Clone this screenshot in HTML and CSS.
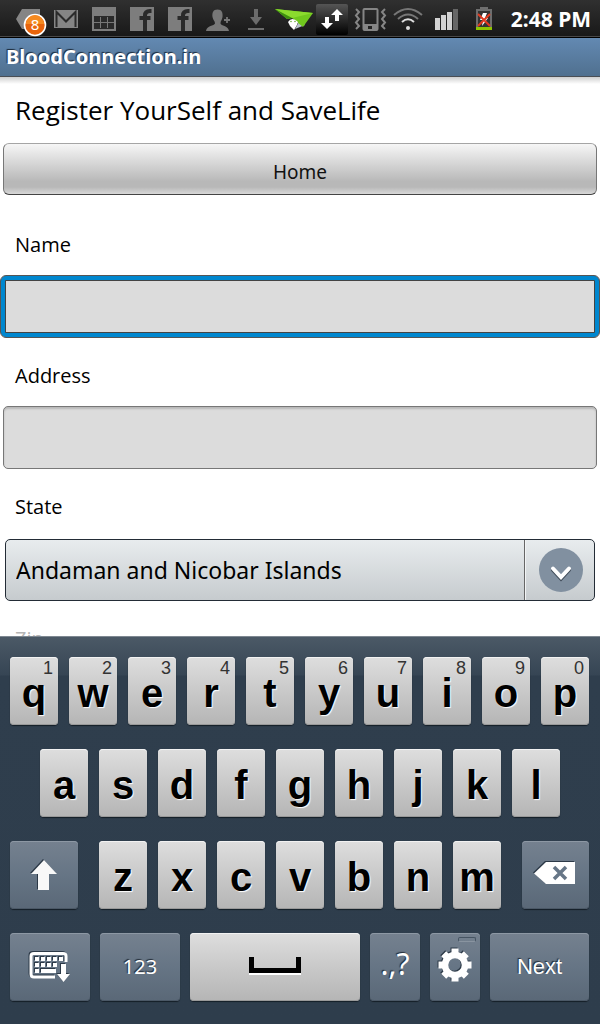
FILE: index.html
```html
<!DOCTYPE html>
<html lang="en">
<head>
<meta charset="utf-8">
<meta name="viewport" content="width=device-width, initial-scale=1">
<title>BloodConnection.in</title>
<link rel="stylesheet" href="styles.css">
</head>
<body class="screen">
<div class="status">
  <div class="status-icons">
    <svg class="status-icon" viewBox="0 0 38 37"><path d="M7 19 13 9H31V29H13Z" fill="#858585"/><circle cx="26" cy="25" r="10.500" fill="#e8640c" stroke="#fff" stroke-width="1.600"/><path d="M17 24a9 9 0 0 1 18 0Z" fill="#f58a20"/><text class="badge-text" x="26" y="30" text-anchor="middle">8</text></svg>
    <svg class="status-icon" viewBox="0 0 38 37"><rect x="7" y="10" width="24" height="18" fill="#858585"/><path d="M9.500 27V12L19 21.500 28.500 12V27" fill="none" stroke="#2b2b2b" stroke-width="2"/></svg>
    <svg class="status-icon" viewBox="0 0 38 37"><path d="M7 7H31V31H7Z" fill="#7d7d7d"/><path d="M9 16H29V29H9Z" fill="#2a2a2a"/><path d="M9 22.500H29M15.500 17V28M22.500 17V28" stroke="#777" fill="none"/></svg>
    <svg class="status-icon" viewBox="0 0 38 37"><path d="M7 7H31V31H7Z" fill="#7d7d7d"/><path d="M22 31V15.500Q22 11 27 11H28.500M16.500 18H27.500" fill="none" stroke="#2a2a2a" stroke-width="4"/></svg>
    <svg class="status-icon" viewBox="0 0 38 37"><path d="M7 7H31V31H7Z" fill="#7d7d7d"/><path d="M22 31V15.500Q22 11 27 11H28.500M16.500 18H27.500" fill="none" stroke="#2a2a2a" stroke-width="4"/></svg>
    <svg class="status-icon" viewBox="0 0 38 37"><path d="M18.500 9.500C14 9.500 13 13 13.500 17 14 20 16 21 16 23.500 15 26 8 25 7 31H30C29 25 22 26 21.500 23.500 21.500 21 23 20 23.500 17 24 13 23 9.500 18.500 9.500Z" fill="#777"/><path d="M25 20H31M28 17V23" stroke="#777" stroke-width="1.800"/></svg>
    <svg class="status-icon" viewBox="0 0 38 37"><path d="M17 9H21V17H25L19 25 13 17H17ZM11 28H27V30H11Z" fill="#6c6c6c"/></svg>
    <svg class="status-icon" viewBox="0 0 38 37"><path d="M20 29 25 20 30 25Z" fill="#b9c3cc"/><path d="M0 9 38 13 28 27 17 18 12 19Z" fill="#71c81e"/><path d="M0 9 38 13 17 18Z" fill="#8bdb2e"/><path d="M0 9 17 18 12 19Z" fill="#3f8f10"/><path d="M13 22Q17 16 23 22L22 25 19 30 15 26Z" fill="#fff"/><circle cx="16" cy="21.500" r=".7" fill="#4a9a14"/><circle cx="20" cy="21.500" r=".7" fill="#4a9a14"/></svg>
    <svg class="status-icon" viewBox="0 0 38 37"><defs><linearGradient id="sync" x2="0" y2="1"><stop stop-color="#555"/><stop offset="1" stop-color="#000"/></linearGradient></defs><rect x="3" y="4" width="32" height="31" rx="2" fill="url(#sync)"/><path d="M12 17H16V23H20L14 29 8 23H12ZM22 21V15H18L24 9 30 15H26V21Z" fill="#fff"/></svg>
    <svg class="status-icon" viewBox="0 0 38 37"><rect x="12.500" y="9" width="14" height="21" rx="1" fill="none" stroke="#858585" stroke-width="2"/><path d="M12 24H27V30H12Z" fill="#858585"/><rect x="17" y="26" width="4" height="3" fill="#222"/><path d="M5 9 8 12 5 15.500 8 19 5 22.500 8 26 5 29M34 9 31 12 34 15.500 31 19 34 22.500 31 26 34 29" fill="none" stroke="#858585" stroke-width="2"/></svg>
    <svg class="status-icon" viewBox="0 0 38 37"><g fill="none" stroke="#777" stroke-width="2"><path d="M5 15Q19 3 33 15"/><path d="M9 19Q19 10 29 19"/><path d="M13 22Q19 16.500 25 22" stroke="#ddd"/></g><circle cx="19" cy="28" r="2" fill="#ddd"/></svg>
    <svg class="status-icon" viewBox="0 0 38 37"><path d="M8 18H13V30H8ZM14 15H19V30H14ZM20 12H25V30H20Z" fill="#d2d2d2"/><path d="M26 9H31V30H26Z" fill="#666"/></svg>
    <svg class="status-icon" viewBox="0 0 38 37"><path d="M15 7H23V9H27V30H11V9H15Z" fill="#6e6e6e"/><path d="M13 11H25V27H13Z" fill="#333"/><path d="M18 13H22L20 18H23L17 26 18 20H15Z" fill="#fff"/><path d="M13 14 25 26M25 14 13 26" stroke="#e23a20" stroke-width="2"/><path d="M11 27H27V30H11Z" fill="#8fc400"/></svg>
  </div>
  <time class="clock">2:48 PM</time>
</div>
<header class="title-bar">BloodConnection.in</header>
<main class="page">
  <h1 class="heading">Register YourSelf and SaveLife</h1>
  <button class="home" type="button">Home</button>
  <form class="form">
    <div class="field">
      <label class="label" for="name">Name</label>
      <input class="input input-active" id="name" type="text">
    </div>
    <div class="field">
      <label class="label" for="address">Address</label>
      <input class="input" id="address" type="text">
    </div>
    <div class="field">
      <label class="label" for="state">State</label>
      <div class="select-wrap">
        <select class="select" id="state"><option>Andaman and Nicobar Islands</option></select>
        <span class="select-arrow"><svg width="44" height="44" viewBox="0 0 44 44"><circle cx="22" cy="22" r="22" fill="#8190a0"/><path d="M14 22 22 30.500 30 22" fill="none" stroke="#3f4b58" stroke-width="4" stroke-linecap="round"/><path d="M14 20.500 22 29 30 20.500" fill="none" stroke="#fff" stroke-width="4" stroke-linecap="round"/></svg></span>
      </div>
    </div>
    <div class="field"><span class="label label-faded">Zip</span></div>
  </form>
</main>
<section class="keyboard" aria-label="Keyboard">
  <div class="row">
    <button class="key">q<span class="hint">1</span></button><button class="key">w<span class="hint">2</span></button><button class="key">e<span class="hint">3</span></button><button class="key">r<span class="hint">4</span></button><button class="key">t<span class="hint">5</span></button><button class="key">y<span class="hint">6</span></button><button class="key">u<span class="hint">7</span></button><button class="key">i<span class="hint">8</span></button><button class="key">o<span class="hint">9</span></button><button class="key">p<span class="hint">0</span></button>
  </div>
  <div class="row row-inset">
    <button class="key">a</button><button class="key">s</button><button class="key">d</button><button class="key">f</button><button class="key">g</button><button class="key">h</button><button class="key">j</button><button class="key">k</button><button class="key">l</button>
  </div>
  <div class="row">
    <button class="key key-dark key-shift" aria-label="Shift"><svg class="glyph" width="28" height="32" viewBox="0 0 28 32"><path d="M14 1 27 15H19V31H8V15H1Z" fill="#f8f8f8"/></svg></button>
    <button class="key">z</button><button class="key">x</button><button class="key">c</button><button class="key">v</button><button class="key">b</button><button class="key">n</button><button class="key">m</button>
    <button class="key key-dark key-delete" aria-label="Delete"><svg class="glyph" width="44" height="26" viewBox="0 0 44 26"><path d="M0 12.500 12 1H41V23H12Z" fill="#fff"/><path d="M20 6 32 18M32 6 20 18" stroke="#667687" stroke-width="3.500"/></svg></button>
  </div>
  <div class="row row-tight">
    <button class="key key-dark key-wide" aria-label="Hide keyboard"><svg class="glyph" width="42" height="32" viewBox="0 0 42 32"><path d="M37 11V5Q37 2.500 34 2.500H5Q2 2.500 2 5V23Q2 26 5 26H26" fill="none" stroke="#fff" stroke-width="3"/><path d="M6 6H10V10H6ZM12 6H16V10H12ZM18 6H22V10H18ZM24 6H28V10H24ZM30 6H34V10H30ZM6 12H10V16H6ZM12 12H16V16H12ZM18 12H22V16H18ZM24 12H28V16H24ZM6 18H10V22H6ZM12 18H27V22H12ZM32 13H37V23H41L34.500 31 28 23H32Z" fill="#fff"/></svg></button>
    <button class="key key-dark key-wide key-numbers">123</button>
    <button class="key key-space" aria-label="Space"><svg width="52" height="18" viewBox="0 0 52 18"><path d="M0 16H52V18H0Z" fill="#fff"/><path d="M0 0H5V11H47V0H52V16H0Z"/></svg></button>
    <button class="key key-dark key-small key-marks">.,?</button>
    <button class="key key-dark key-small key-settings" aria-label="Settings"><svg class="glyph" width="34" height="34" viewBox="-17 -17 34 34"><circle r="10" fill="none" stroke="#fff" stroke-width="6.500"/><path d="M0-16.500V-10M0 16.500V10M-16.500 0H-10M16.500 0H10M-11.300-11.300-8-8M11.300 11.300 8 8M11.300-11.300 8-8M-11.300 11.300-8 8" stroke="#fff" stroke-width="7"/></svg><span class="notch"></span></button>
    <button class="key key-dark key-next">Next</button>
  </div>
</section>
</body>
</html>
```
FILE: styles.css
```css
* { box-sizing: border-box; }

.screen {
  margin: 0;
  height: 100vh;
  display: flex;
  flex-direction: column;
  background: #fff;
  color: #000;
  font-family: "Open Sans", "Noto Sans", sans-serif;
}

.status {
  flex: none;
  display: flex;
  justify-content: space-between;
  height: 38px;
  padding: 0 9px;
  background: linear-gradient(#303030, #181818);
  border-bottom: 1px solid #000;
  box-shadow: inset 0 -1px #484848;
}
.status-icons { display: flex; }
.status-icon { width: 38px; height: 37px; }
.badge-text { font: 15px "Noto Sans", sans-serif; fill: #fff; }
.clock {
  color: #fff;
  font: bold 21px/38px "Noto Sans", sans-serif;
  white-space: nowrap;
}

.title-bar {
  flex: none;
  height: 39px;
  padding-left: 6px;
  background: linear-gradient(#6389b2, #50708f);
  border-bottom: 1px solid #4a4f55;
  color: #fff;
  font: bold 20px/38px "Noto Sans", sans-serif;
  text-shadow: -1px -1px 1px #1c2a3a;
}

.page {
  flex: 1;
  min-height: 0;
  overflow: hidden;
  display: flex;
  flex-direction: column;
  background: linear-gradient(#cfcfcf, #fff 7px);
}
.heading {
  flex: none;
  margin: 14px 15px 13px;
  font-size: 26px;
  font-weight: normal;
  line-height: 39px;
}
.home {
  flex: none;
  margin: 0 3px;
  height: 52px;
  padding: 6px 0 0;
  border: 1px solid #777;
  border-top-color: #a5a5a5;
  border-bottom-color: #444;
  border-radius: 6px;
  background: linear-gradient(#f6f6f6, #b8b8b8 75%, #b8b8b8 86%, #d8d8d8);
  font: 19px "Noto Sans", sans-serif;
  color: #111;
}
.form {
  flex: none;
  display: flex;
  flex-direction: column;
  gap: 8px;
  margin-top: 20px;
}
.field { display: flex; flex-direction: column; }
.label {
  padding-left: 15px;
  font-size: 20px;
  line-height: 60px;
}
.label-faded { color: #b5b5b5; }
.input {
  height: 63px;
  margin: 0 3px;
  padding: 0 12px;
  border: 1px solid #777;
  border-radius: 5px;
  background: #dcdcdc;
  box-shadow: inset 0 2px 2px #b8b8b8;
  font: 24px "Noto Sans", sans-serif;
  outline: none;
}
.input-active {
  margin: 0;
  border-color: #555;
  border-radius: 6px;
  box-shadow: inset 0 0 0 4px #0087cf, inset 0 0 0 5px #444;
}
.select-wrap {
  position: relative;
  margin: 2px 5px 0;
}
.select {
  appearance: none;
  display: block;
  width: 100%;
  height: 62px;
  padding: 0 80px 0 10px;
  border: 1px solid #232c36;
  border-radius: 5px;
  background: linear-gradient(#e8ecee, #c6cbce);
  color: #000;
  font: 23px "Noto Sans", sans-serif;
}
.select-arrow {
  position: absolute;
  inset: 1px 1px 1px auto;
  width: 70px;
  padding-left: 2px;
  display: flex;
  align-items: center;
  justify-content: center;
  border-left: 1px solid #666;
  box-shadow: inset 1px 0 #f2f4f5;
  pointer-events: none;
}

.keyboard {
  flex: none;
  display: flex;
  flex-direction: column;
  gap: 24px;
  padding: 20px 11px 23px 10px;
  border-top: 1px solid #7e8891;
  background: linear-gradient(#4b5966, #364554 38px, #2f3e4d 39px, #2e3d4c);
}
.row { display: flex; gap: 11px; }
.row-inset { padding: 0 29px 0 30px; }
.row-tight { gap: 10px; }
.key {
  position: relative;
  flex: 48 1 0;
  min-width: 0;
  height: 68px;
  padding: 16px 0 0;
  display: flex;
  justify-content: center;
  border: 0;
  border-radius: 4px;
  background: linear-gradient(#dedede, #c9c9c9 50%, #b5b5b5);
  box-shadow: inset 0 1px #f2f2f2, inset 0 -1px #999, 0 1px 1px #151e27;
  color: #000;
  font: bold 40px/40px "Liberation Sans", Arial, sans-serif;
  text-shadow: 1px 1px 1px #fff;
}
.hint {
  position: absolute;
  top: 3px;
  right: 5px;
  color: #333;
  font: 18px/16px "Liberation Sans", Arial, sans-serif;
  text-shadow: none;
}
.key-dark {
  padding: 0;
  align-items: center;
  background: linear-gradient(#75818f, #667585 50%, #5a6877);
  box-shadow: inset 0 1px #8d98a4, inset 0 -1px #4b5866, 0 1px 1px #151e27;
  color: #fff;
  text-shadow: -1px -1px 1px #222c37;
}
.glyph { flex: none; filter: drop-shadow(-1px -1px 0 #2c3947); }
.key-shift { flex-grow: 68; margin-right: 10px; }
.key-delete { flex-grow: 67; margin-left: 10px; padding-bottom: 3px; }
.key-wide { flex-grow: 80; }
.key-space { flex-grow: 170; padding-top: 24px; }
.key-small { flex-grow: 50; }
.key-settings { padding-bottom: 4px; }
.key-next { flex-grow: 99; font-size: 22px; font-weight: normal; }
.key-numbers { padding-bottom: 2px; font: 20px "Noto Sans", sans-serif; }
.key-marks { padding-bottom: 6px; font: 30px/60px "Noto Sans", sans-serif; }
.notch {
  position: absolute;
  top: 4px;
  right: 4px;
  width: 18px;
  height: 5px;
  border: 1px solid #465462;
  border-bottom-color: #8994a0;
  border-radius: 2px;
}
```
